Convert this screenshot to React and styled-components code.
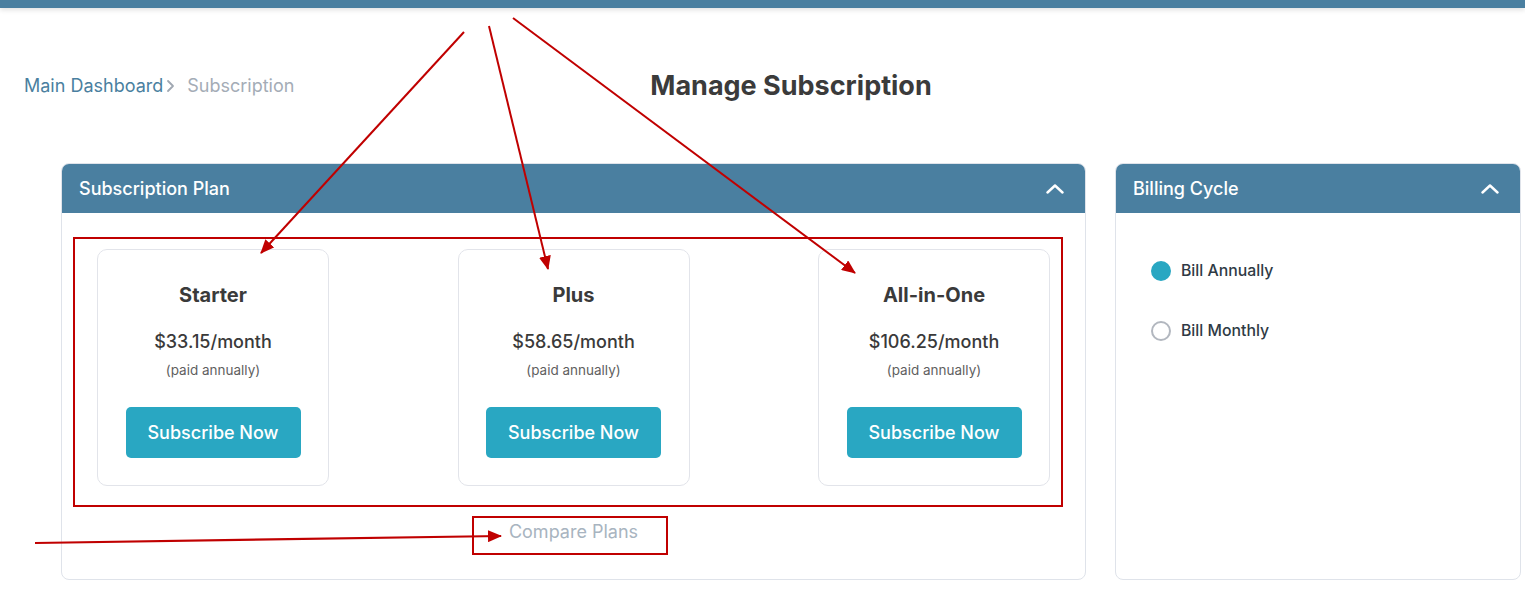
import React from "react";
import styled, { createGlobalStyle } from "styled-components";

const Global = createGlobalStyle`
  html, body { margin: 0; padding: 0; background: #ffffff; }
  body { font-family: Inter, "Noto Sans", "Liberation Sans", sans-serif; color: #3a3a3a; }
  * { box-sizing: border-box; }
`;

const Page = styled.div`
  position: relative;
  width: 1525px;
  height: 592px;
  overflow: hidden;
  background: #fff;
`;

const TopBar = styled.div`
  height: 8px;
  background: #4a7fa0;
  box-shadow: 0 2px 5px rgba(0, 0, 0, 0.12);
`;

const Header = styled.header`
  display: grid;
  margin-top: 62px;
  padding: 0 4px 0 61px;
  align-items: center;
`;

const Breadcrumb = styled.nav`
  grid-area: 1 / 1;
  justify-self: start;
  margin-left: -37px;
  display: flex;
  align-items: center;
  font-size: 18px;
  line-height: 24px;
`;

const Crumb = styled.span`
  color: ${(p) => (p.$current ? "#a4acb6" : "#4a7fa0")};
`;

const Sep = styled.span`
  display: flex;
  align-items: center;
  margin: 0 12px 0 3px;
  color: #a0a8b2;
`;

const Title = styled.h1`
  grid-area: 1 / 1;
  margin: 0;
  text-align: center;
  font-size: 27px;
  line-height: 32px;
  font-weight: 700;
  color: #3b3b3b;
`;

const Columns = styled.div`
  display: grid;
  grid-template-columns: 1025px 406px;
  gap: 29px;
  margin-top: 61px;
  padding-left: 61px;
`;

const Panel = styled.section`
  height: 417px;
  border: 1px solid #dfe3ea;
  border-radius: 8px;
  overflow: hidden;
  display: flex;
  flex-direction: column;
`;

const PanelHead = styled.div`
  height: 50px;
  margin: -1px -1px 0;
  background: #4a7fa0;
  border-radius: 8px 8px 0 0;
  display: flex;
  align-items: center;
  justify-content: space-between;
  padding: 1px 22px 0 18px;
  color: #fff;
  font-size: 18px;
  font-weight: 500;
`;

const PlanBody = styled.div`
  padding: 36px 35px 0 35px;
  display: flex;
  flex-direction: column;
  align-items: center;
`;

const PlanRow = styled.div`
  align-self: stretch;
  display: flex;
  justify-content: space-between;
`;

const PlanCard = styled.div`
  width: 232px;
  border: 1px solid #e2e4ea;
  border-radius: 10px;
  padding: 33px 0 27px;
  display: flex;
  flex-direction: column;
  align-items: center;
`;

const PlanName = styled.div`
  font-size: 20px;
  line-height: 24px;
  font-weight: 700;
  color: #3a3a3a;
`;

const Price = styled.div`
  margin-top: 24px;
  font-size: 18px;
  line-height: 22px;
  font-weight: 500;
  color: #3a3a3a;
`;

const Note = styled.div`
  margin-top: 9px;
  font-size: 13.5px;
  line-height: 16px;
  color: #5f5f5f;
`;

const SubscribeButton = styled.button`
  margin-top: 29px;
  width: 175px;
  height: 51px;
  border: none;
  border-radius: 5px;
  background: #29a7c2;
  color: #fff;
  font-family: inherit;
  font-size: 18px;
  font-weight: 500;
`;

const CompareLink = styled.a`
  margin-top: 36px;
  font-size: 18px;
  line-height: 20px;
  color: #a8b4c0;
`;

const BillingBody = styled.div`
  padding: 48px 36px 0 35px;
  display: flex;
  flex-direction: column;
  gap: 40px;
`;

const Option = styled.label`
  display: flex;
  align-items: center;
  gap: 10px;
  font-size: 15.8px;
  line-height: 20px;
  font-weight: 500;
  color: #2f3a45;
`;

const Radio = styled.span`
  width: 20px;
  height: 20px;
  border-radius: 50%;
  background: ${(p) => (p.$checked ? "#29a7c2" : "#fff")};
  border: 2px solid ${(p) => (p.$checked ? "#29a7c2" : "#b2b7bf")};
`;

const Overlay = styled.svg`
  position: absolute;
  left: 0;
  top: 0;
  pointer-events: none;
`;

const ChevronUp = () => (
  <svg width="18" height="10" viewBox="0 0 18 10">
    <path d="M1.5 8.5 L9 1.5 L16.5 8.5" fill="none" stroke="#fff" strokeWidth="2.4" strokeLinecap="round" strokeLinejoin="round" />
  </svg>
);

const plans = [
  { name: "Starter", price: "$33.15/month" },
  { name: "Plus", price: "$58.65/month" },
  { name: "All-in-One", price: "$106.25/month" },
];

export default function App() {
  return (
    <Page>
      <Global />
      <TopBar />
      <Header>
        <Breadcrumb>
          <Crumb>Main Dashboard</Crumb>
          <Sep>
            <svg width="9" height="14" viewBox="0 0 9 14">
              <path d="M2 2 L7 7 L2 12" fill="none" stroke="currentColor" strokeWidth="1.8" strokeLinecap="round" strokeLinejoin="round" />
            </svg>
          </Sep>
          <Crumb $current>Subscription</Crumb>
        </Breadcrumb>
        <Title>Manage Subscription</Title>
      </Header>
      <Columns>
        <Panel>
          <PanelHead>
            <span>Subscription Plan</span>
            <ChevronUp />
          </PanelHead>
          <PlanBody>
            <PlanRow>
              {plans.map((p) => (
                <PlanCard key={p.name}>
                  <PlanName>{p.name}</PlanName>
                  <Price>{p.price}</Price>
                  <Note>(paid annually)</Note>
                  <SubscribeButton>Subscribe Now</SubscribeButton>
                </PlanCard>
              ))}
            </PlanRow>
            <CompareLink>Compare Plans</CompareLink>
          </PlanBody>
        </Panel>
        <Panel>
          <PanelHead>
            <span>Billing Cycle</span>
            <ChevronUp />
          </PanelHead>
          <BillingBody>
            <Option>
              <Radio $checked />
              Bill Annually
            </Option>
            <Option>
              <Radio />
              Bill Monthly
            </Option>
          </BillingBody>
        </Panel>
      </Columns>
      <Overlay width="1525" height="592" viewBox="0 0 1525 592">
        <defs>
          <marker id="ah" markerWidth="14" markerHeight="12" refX="13" refY="6" orient="auto" markerUnits="userSpaceOnUse">
            <path d="M0 0 L14 6 L0 12 Z" fill="#c00000" />
          </marker>
        </defs>
        <g stroke="#c00000" strokeWidth="2" fill="none">
          <rect x="74" y="238" width="988" height="268" />
          <rect x="473" y="517" width="194" height="37" />
          <line x1="464" y1="32" x2="261" y2="253" markerEnd="url(#ah)" />
          <line x1="489" y1="26" x2="548" y2="269" markerEnd="url(#ah)" />
          <line x1="513" y1="18" x2="855" y2="273" markerEnd="url(#ah)" />
          <line x1="35" y1="543" x2="501" y2="536" markerEnd="url(#ah)" strokeWidth="2.2" />
        </g>
      </Overlay>
    </Page>
  );
}
